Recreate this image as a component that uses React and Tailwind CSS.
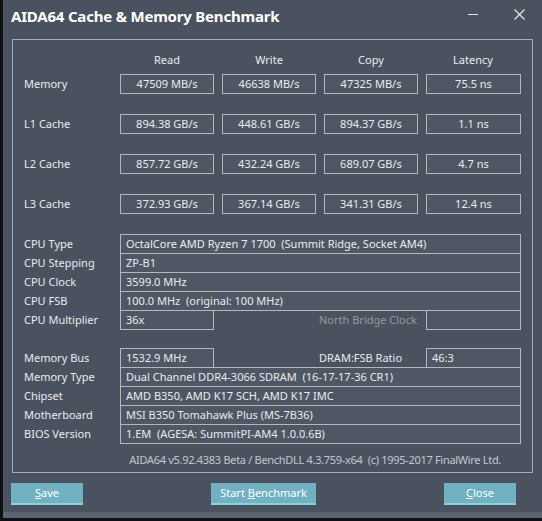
import React from 'react';

const font = { fontFamily: '"Noto Sans", "Open Sans", Arial, sans-serif' };

const results = [
  { name: 'Memory', vals: ['47509 MB/s', '46638 MB/s', '47325 MB/s', '75.5 ns'] },
  { name: 'L1 Cache', vals: ['894.38 GB/s', '448.61 GB/s', '894.37 GB/s', '1.1 ns'] },
  { name: 'L2 Cache', vals: ['857.72 GB/s', '432.24 GB/s', '689.07 GB/s', '4.7 ns'] },
  { name: 'L3 Cache', vals: ['372.93 GB/s', '367.14 GB/s', '341.31 GB/s', '12.4 ns'] },
];

function Box({ children, className = '' }) {
  return (
    <div className={`h-[20px] border border-[#b4b8be] bg-white/[0.03] flex items-center whitespace-pre ${className}`}>
      {children}
    </div>
  );
}

function InfoRow({ label, value, first }) {
  return (
    <div className={`flex items-center h-[20px] ${first ? '' : '-mt-px'}`}>
      <div className="w-[96px] shrink-0">{label}</div>
      <Box className="w-[401px] px-[5px]">{value}</Box>
    </div>
  );
}

function SplitRow({ label, value, midLabel, midValue, mutedMid, first }) {
  return (
    <div className={`flex items-center h-[20px] ${first ? '' : '-mt-px'}`}>
      <div className="w-[96px] shrink-0">{label}</div>
      <Box className="w-[94px] px-[5px]">{value}</Box>
      <div className={`w-[212px] pl-[105px] ${mutedMid ? 'text-[#8d9c9c]' : ''}`}>{midLabel}</div>
      <Box className="w-[95px] px-[5px]">{midValue}</Box>
    </div>
  );
}

function Btn({ children, className = '' }) {
  return (
    <button className={`h-[22px] bg-[#70b1c2] border-b-2 border-[#85d3db] text-white text-[11px] flex items-center justify-center ${className}`}>
      {children}
    </button>
  );
}

export default function App() {
  return (
    <div className="w-[542px] h-[521px] bg-[#111012] overflow-hidden" style={font}>
      <div className="ml-[3px] h-[518px] bg-[#4a5260] border-b-[6px] border-[#5a6473] flex flex-col text-[11px] text-[#e9ebee]">
        {/* title bar */}
        <div className="h-[39px] flex items-start pt-[5px] pl-[8px] relative">
          <span className="text-white font-bold text-[15px] tracking-[-0.2px]">AIDA64 Cache &amp; Memory Benchmark</span>
          <div className="absolute left-[465px] top-[14px] w-[10px] h-px bg-[#e6e8ea]" />
          <svg className="absolute left-[511px] top-[9px]" width="11" height="11" viewBox="0 0 11 11">
            <path d="M0.5 0.5 L10.5 10.5 M10.5 0.5 L0.5 10.5" stroke="#eceef0" strokeWidth="1.1" />
          </svg>
        </div>

        {/* group box */}
        <div className="ml-[9px] w-[521px] h-[434px] border border-[#a7abb2] pl-[11px] flex flex-col">
          <div className="flex mt-[11px] h-[18px] items-center">
            <div className="w-[96px]" />
            <div className="flex gap-[8px]">
              {['Read', 'Write', 'Copy', 'Latency'].map((h) => (
                <div key={h} className="w-[94px] text-center">{h}</div>
              ))}
            </div>
          </div>

          <div className="flex flex-col gap-[20px] mt-[5px]">
            {results.map((r) => (
              <div key={r.name} className="flex items-center h-[20px]">
                <div className="w-[96px]">{r.name}</div>
                <div className="flex gap-[8px]">
                  {r.vals.map((v, i) => (
                    <Box key={i} className={`${i === 3 ? 'w-[95px]' : 'w-[94px]'} justify-center`}>{v}</Box>
                  ))}
                </div>
              </div>
            ))}
          </div>

          <div className="flex flex-col mt-[20px]">
            <InfoRow first label="CPU Type" value="OctalCore AMD Ryzen 7 1700  (Summit Ridge, Socket AM4)" />
            <InfoRow label="CPU Stepping" value="ZP-B1" />
            <InfoRow label="CPU Clock" value="3599.0 MHz" />
            <InfoRow label="CPU FSB" value="100.0 MHz  (original: 100 MHz)" />
            <SplitRow label="CPU Multiplier" value="36x" midLabel="North Bridge Clock" midValue="" mutedMid />
          </div>

          <div className="flex flex-col mt-[18px]">
            <SplitRow first label="Memory Bus" value="1532.9 MHz" midLabel="DRAM:FSB Ratio" midValue="46:3" />
            <InfoRow label="Memory Type" value="Dual Channel DDR4-3066 SDRAM  (16-17-17-36 CR1)" />
            <InfoRow label="Chipset" value="AMD B350, AMD K17 SCH, AMD K17 IMC" />
            <InfoRow label="Motherboard" value="MSI B350 Tomahawk Plus (MS-7B36)" />
            <InfoRow label="BIOS Version" value="1.EM  (AGESA: SummitPI-AM4 1.0.0.6B)" />
          </div>

          <div className="mt-[8px] pr-[31px] text-right text-[#c3c7cc] whitespace-pre tracking-[-0.3px]">
            {'AIDA64 v5.92.4383 Beta / BenchDLL 4.3.759-x64  (c) 1995-2017 FinalWire Ltd.'}
          </div>
        </div>

        {/* buttons */}
        <div className="flex items-start mt-[10px] pl-[8px]">
          <Btn className="w-[72px]"><span><span className="underline">S</span>ave</span></Btn>
          <Btn className="w-[105px] ml-[128px]"><span>Start <span className="underline">B</span>enchmark</span></Btn>
          <Btn className="w-[72px] ml-[128px]"><span><span className="underline">C</span>lose</span></Btn>
        </div>
      </div>
    </div>
  );
}
